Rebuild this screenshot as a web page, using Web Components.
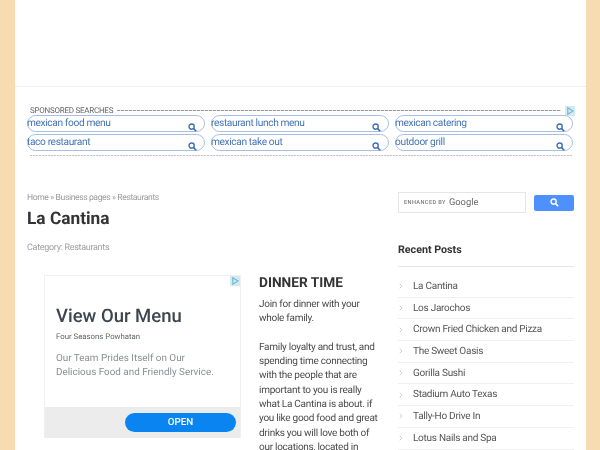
<!DOCTYPE html>
<html>
<head>
<meta charset="utf-8">
<style>
  html, body { margin: 0; height: 450px; overflow: hidden; background: #f6dcb0; }
  body { font-family: Roboto, "Liberation Sans", sans-serif; text-rendering: geometricPrecision; }
</style>
</head>
<body>
<site-page>
  <sponsored-searches slot="top">
    <search-pill>mexican food menu</search-pill>
    <search-pill>restaurant lunch menu</search-pill>
    <search-pill>mexican catering</search-pill>
    <search-pill>taco restaurant</search-pill>
    <search-pill>mexican take out</search-pill>
    <search-pill>outdoor grill</search-pill>
  </sponsored-searches>
  <article-main slot="main">
    <display-ad slot="ad"></display-ad>
    <h2 slot="heading">DINNER TIME</h2>
    Join for dinner with your whole family.<br><br>Family loyalty and trust, and spending time connecting with the people that are important to you is really what La Cantina is about. if you like good food and great drinks you will love both of our locations, located in
  </article-main>
  <side-bar slot="side">
    <post-link>La Cantina</post-link>
    <post-link>Los Jarochos</post-link>
    <post-link>Crown Fried Chicken and Pizza</post-link>
    <post-link>The Sweet Oasis</post-link>
    <post-link>Gorilla Sushi</post-link>
    <post-link>Stadium Auto Texas</post-link>
    <post-link>Tally-Ho Drive In</post-link>
    <post-link>Lotus Nails and Spa</post-link>
  </side-bar>
</site-page>

<script>
const adIcon = /* html */`<svg width="10" height="10" viewBox="0 0 10 10"><rect width="10" height="10" fill="#d5e9f0"/><path d="M2.8 1.8v6.4L8 5z" fill="none" stroke="#6cbdd4" stroke-width="1.2"/></svg>`;

const searchIcon = color => /* html */`<svg width="9" height="9" viewBox="0 0 9 9"><circle cx="3.6" cy="3.6" r="2.6" fill="none" stroke="${color}" stroke-width="1.4"/><path d="M5.6 5.6 8.2 8.2" stroke="${color}" stroke-width="1.6"/></svg>`;

class SitePage extends HTMLElement {
  constructor() {
    super();
    this.attachShadow({ mode: 'open' });
    this.shadowRoot.innerHTML = /* html */`
      <style>
        :host { display: block; width: 571px; height: 450px; margin-left: 15px; background: #fff; overflow: hidden; filter: blur(.35px); }
        .banner { height: 86px; border-bottom: 1px solid #f0f0f0; }
        .top { padding: 19px 12px 0 12px; height: 101px; box-sizing: border-box; }
        .columns { display: flex; padding: 0 12px; gap: 20px; }
        .left { width: 351px; flex: none; }
        .crumbs { font-size: 8.6px; letter-spacing: -.4px; line-height: 12px; color: #9a9a9a; padding-top: 4px; }
        h1 { margin: 5px 0 0; font-size: 17.3px; line-height: 20px; font-weight: 700; color: #333; }
        .cat { margin-top: 13px; font-size: 9px; letter-spacing: -.3px; line-height: 12px; color: #a0a0a0; }
        slot[name=main] { display: block; margin-top: 21px; }
      </style>
      <div class="banner"></div>
      <div class="top"><slot name="top"></slot></div>
      <div class="columns">
        <div class="left">
          <div class="crumbs">Home » Business pages » Restaurants</div>
          <h1>La Cantina</h1>
          <div class="cat">Category: Restaurants</div>
          <slot name="main"></slot>
        </div>
        <slot name="side"></slot>
      </div>`;
  }
}

class SponsoredSearches extends HTMLElement {
  constructor() {
    super();
    this.attachShadow({ mode: 'open' });
    this.shadowRoot.innerHTML = /* html */`
      <style>
        :host { display: block; width: 548px; font-size: 8px; letter-spacing: -.25px; color: #666; }
        .head { display: flex; align-items: center; gap: 4px; height: 9px; padding-left: 3px; line-height: 10px; }
        .dots { flex: 1; height: 1px; background: repeating-linear-gradient(90deg, #999 0 3px, #ddd 3px 4px); }
        .ad { display: flex; }
        .grid { display: grid; grid-template-columns: repeat(3, 178px); column-gap: 6px; row-gap: 2px; }
        .foot { height: 1px; margin: 4px 3px 0; background: repeating-linear-gradient(90deg, #c4c4c4 0 2px, #eee 2px 3px); }
      </style>
      <div class="head"><span>SPONSORED SEARCHES</span><span class="dots"></span><span class="ad">${adIcon}</span></div>
      <div class="grid"><slot></slot></div>
      <div class="foot"></div>`;
  }
}

class SearchPill extends HTMLElement {
  constructor() {
    super();
    this.attachShadow({ mode: 'open' });
    this.shadowRoot.innerHTML = /* html */`
      <style>
        :host { display: flex; box-sizing: border-box; height: 17px; border: 1px solid #a9bfe2; border-radius: 9px; color: #4475b8; font-size: 10.2px; letter-spacing: -.38px; line-height: 16px; position: relative; }
        span { margin-left: -1px; }
        svg { position: absolute; right: 7px; bottom: -1px; }
      </style>
      <span><slot></slot></span>${searchIcon('#3b6fb5')}`;
  }
}

class ArticleMain extends HTMLElement {
  constructor() {
    super();
    this.attachShadow({ mode: 'open' });
    this.shadowRoot.innerHTML = /* html */`
      <style>
        :host { display: flex; gap: 18px; padding-left: 17px; }
        .body { width: 120px; font-size: 10px; letter-spacing: -.27px; line-height: 14.3px; color: #4a4a4a; }
        ::slotted(h2) { margin: 0 0 7px; font-size: 13.7px; letter-spacing: 0; line-height: 16px; font-weight: 700; color: #333; }
      </style>
      <slot name="ad"></slot>
      <div class="body"><slot name="heading"></slot><slot></slot></div>`;
  }
}

class DisplayAd extends HTMLElement {
  constructor() {
    super();
    this.attachShadow({ mode: 'open' });
    this.shadowRoot.innerHTML = /* html */`
      <style>
        :host { display: flex; flex-direction: column; box-sizing: border-box; width: 197px; height: 163px; border: 1px solid #f0f0f0; border-bottom: 0; flex: none; position: relative; letter-spacing: 0; }
        .mark { position: absolute; top: 0; right: 0; display: flex; }
        .text { flex: 1; padding: 29px 0 0 11px; }
        .title { font-size: 18.5px; line-height: 22px; font-weight: 500; color: #3c4650; }
        .sub { margin-top: 5px; font-size: 7.8px; line-height: 10px; color: #5f6368; }
        .desc { margin-top: 10px; font-size: 9.9px; line-height: 14px; color: #8a8f94; }
        .bar { height: 31px; background: #ececec; display: flex; justify-content: flex-end; padding: 6px 4px 0 0; box-sizing: border-box; }
        .open { width: 111px; height: 19px; border-radius: 10px; background: #0a84f0; color: #fff; font-size: 9.8px; font-weight: 500; line-height: 19px; text-align: center; }
      </style>
      <span class="mark">${adIcon}</span>
      <div class="text">
        <div class="title">View Our Menu</div>
        <div class="sub">Four Seasons Powhatan</div>
        <div class="desc">Our Team Prides Itself on Our<br>Delicious Food and Friendly Service.</div>
      </div>
      <div class="bar"><div class="open">OPEN</div></div>`;
  }
}

class SideBar extends HTMLElement {
  constructor() {
    super();
    this.attachShadow({ mode: 'open' });
    this.shadowRoot.innerHTML = /* html */`
      <style>
        :host { display: block; width: 176px; flex: none; padding-top: 4px; }
        .search { display: flex; justify-content: space-between; align-items: center; height: 21px; }
        .box { box-sizing: border-box; width: 128px; height: 21px; border: 1px solid #e6e6e6; display: flex; align-items: center; gap: 3px; padding-left: 5px; }
        .enh { font-size: 5.6px; letter-spacing: .4px; color: #777; font-weight: 500; }
        .goog { font-size: 9.4px; color: #666; }
        .btn { width: 40px; height: 16px; border-radius: 2px; background: #4d90fe; display: flex; align-items: center; justify-content: center; }
        h3 { margin: 30px 0 0; font-size: 10.7px; line-height: 14px; font-weight: 700; color: #333; padding-bottom: 9px; border-bottom: 1px solid #e6e6e6; }
        .list { display: block; margin-top: 9px; }
      </style>
      <div class="search">
        <div class="box"><span class="enh">ENHANCED BY</span><span class="goog">Google</span></div>
        <div class="btn">${searchIcon('#fff')}</div>
      </div>
      <h3>Recent Posts</h3>
      <div class="list"><slot></slot></div>`;
  }
}

class PostLink extends HTMLElement {
  constructor() {
    super();
    this.attachShadow({ mode: 'open' });
    this.shadowRoot.innerHTML = /* html */`
      <style>
        :host { display: flex; align-items: center; box-sizing: border-box; height: 21.7px; border-bottom: 1px solid #f0f0f0; font-size: 10px; letter-spacing: -.27px; color: #555; }
        svg { margin: 0 10px 0 1px; flex: none; }
      </style>
      <svg width="4" height="6" viewBox="0 0 4 6"><path d="M.7.7 3 3 .7 5.3" fill="none" stroke="#c8c8c8" stroke-width=".8"/></svg>
      <slot></slot>`;
  }
}

customElements.define('site-page', SitePage);
customElements.define('sponsored-searches', SponsoredSearches);
customElements.define('search-pill', SearchPill);
customElements.define('article-main', ArticleMain);
customElements.define('display-ad', DisplayAd);
customElements.define('side-bar', SideBar);
customElements.define('post-link', PostLink);
</script>
</body>
</html>
